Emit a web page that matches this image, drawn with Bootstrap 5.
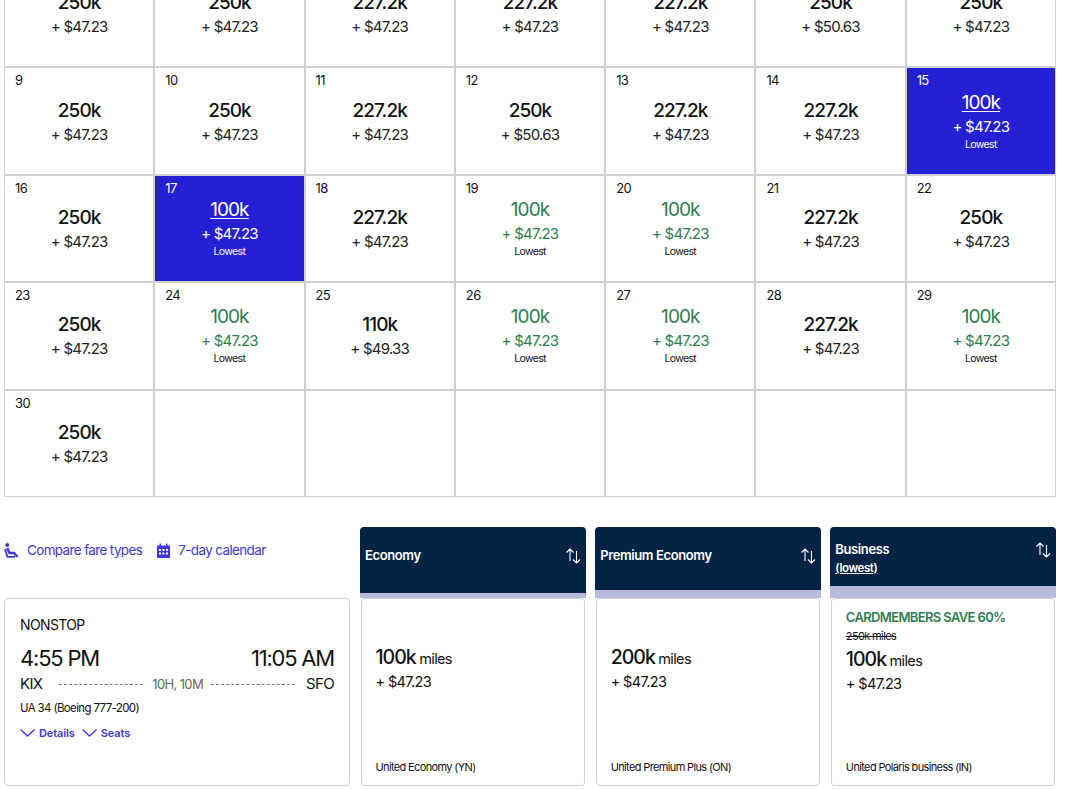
<!DOCTYPE html>
<html lang="en">
<head>
  <meta charset="UTF-8">
  <title>Award calendar</title>
  <link href="https://cdn.jsdelivr.net/npm/bootstrap@5.3.0/dist/css/bootstrap.min.css" rel="stylesheet">
  <style>
    html, body { height: 789px; overflow: hidden; }
    body { background: #fff; color: #111; font-family: Inter, "Liberation Sans", sans-serif; letter-spacing: -0.04em; }
    /* the shot is scrolled, first calendar row is cut at the top */
    .page-wrap { margin-top: -40px; padding: 0 24px 0 4px; }

    .cal-grid { display: grid; grid-template-columns: repeat(7, 1fr); grid-auto-rows: 1fr; gap: 2px; height: 537px; border: 1px solid #d0d0d0; background: #d0d0d0; }
    .day-cell { background: #fff; position: relative; display: flex; flex-direction: column; align-items: center; justify-content: center; padding-top: 1px; }
    .day-num { position: absolute; left: 10px; top: 4px; font-size: 13px; line-height: 16px; }
    .day-miles { font-size: 19px; font-weight: 500; line-height: 26px; letter-spacing: -0.05em; }
    .day-price { font-size: 15px; line-height: 22px; color: #222; letter-spacing: -0.05em; }
    .day-note { font-size: 10.500px; line-height: 16px; margin-top: -1px; }
    .day-low { padding-top: 0; }
    .day-low .day-miles, .day-low .day-price { color: #2e7d4f; font-weight: 400; }
    .day-sel { background: #2620d4; color: #fff; }
    .day-sel .day-miles, .day-sel .day-price { color: #fff; }
    .day-sel .day-miles { text-decoration: underline; text-underline-offset: 2px; text-decoration-thickness: 1px; }

    .fare-area { margin-top: 30px; gap: 10px; }
    .flight-side { width: 346px; flex: none; }
    .top-links { height: 47px; gap: 14px; padding-top: 12px; margin-bottom: 24px; }
    .top-links a { color: #3d38d6; font-size: 13.500px; line-height: 22px; text-decoration: none; gap: 7px; }
    .flight-box { height: 188px; border: 1px solid #d0d0d0; border-radius: 4px; padding: 16px 15px; }
    .stop-label { font-size: 14px; line-height: 20px; margin-bottom: 8px; }
    .time-line { font-size: 22px; line-height: 30px; letter-spacing: -0.055em; }
    .route-line { font-size: 15px; line-height: 20px; margin-top: 1px; }
    .route-dash { flex: 1; border-top: 1px dashed #777; }
    .dash-a { margin: 0 9px 0 17px; }
    .dash-b { margin: 0 11px 0 8px; }
    .route-time { color: #666; font-size: 13px; }
    .plane-line { font-size: 11.500px; line-height: 16px; margin-top: 6px; }
    .detail-links { gap: 7px; margin-top: 9px; }
    .detail-links a { color: #3d38d6; font-size: 11px; line-height: 16px; font-weight: 600; text-decoration: none; letter-spacing: -0.01em; gap: 4px; }

    .fare-list { flex: 1; gap: 9.500px; min-width: 0; }
    .fare-col { flex: 1 1 0; min-width: 0; }
    .fare-head { background: #052344; color: #fff; border-radius: 4px 4px 0 0; padding: 20px 5px 0 5px; font-size: 13px; font-weight: 600; line-height: 16px; letter-spacing: -0.03em; }
    .head-eco { height: 66px; }
    .head-prem { height: 62.500px; }
    .head-biz { height: 59px; padding-top: 14px; }
    .fare-head svg { margin-top: 1px; }
    .sub-low { font-size: 11.500px; line-height: 16px; text-decoration: underline; display: block; margin-top: 3px; }
    .fare-stripe { background: #b7b9dd; }
    .stripe-eco { height: 5px; }
    .stripe-prem { height: 8.500px; }
    .stripe-biz { height: 12px; }
    .fare-body { height: 188px; border: 1px solid #d0d0d0; border-radius: 4px; padding: 0 13.500px; margin: 0 1px; }
    .fare-gap { height: 45px; }
    .fare-save { color: #2e7d4f; font-size: 13px; font-weight: 600; line-height: 18px; margin-top: 9px; }
    .fare-old { font-size: 11px; line-height: 16px; text-decoration: line-through; margin-top: 2px; margin-bottom: 2px; }
    .fare-miles { font-size: 14.500px; line-height: 26px; }
    .fare-miles b { font-size: 19.500px; font-weight: 500; letter-spacing: -0.05em; }
    .fare-tax { font-size: 14.500px; line-height: 20px; }
    .fare-name { font-size: 11px; line-height: 16px; margin-top: auto; margin-bottom: 10px; }
  </style>
</head>
<body>
  <div class="page-wrap">
    <div class="cal-grid" id="cal"></div>

    <div class="fare-area d-flex">
      <div class="flight-side">
        <div class="top-links d-flex align-items-start">
          <a href="#" class="d-flex align-items-center">
            <svg width="16" height="15" viewBox="0 0 16 15" fill="none" stroke="#3d38d6" stroke-width="2.400"><circle cx="3.200" cy="2" r="2" fill="#3d38d6" stroke="none"/><path d="M3.200 5l2.300 5h4.500l3.500 4"/><path d="M1 6l2.500 7.800h7.500" stroke-width="1.800"/></svg>
            Compare fare types</a>
          <a href="#" class="d-flex align-items-center">
            <svg width="15" height="15" viewBox="0 0 15 15" fill="#3d38d6"><path d="M1 2.500h2.500V.5h1.500v2h5v-2h1.500v2H14V15H1z"/><g fill="#fff"><rect x="3" y="6" width="2" height="2"/><rect x="6.500" y="6" width="2" height="2"/><rect x="10" y="6" width="2" height="2"/><rect x="3" y="9.500" width="2" height="2"/><rect x="6.500" y="9.500" width="2" height="2"/><rect x="10" y="9.500" width="2" height="2"/></g></svg>
            7-day calendar</a>
        </div>
        <div class="flight-box">
          <div class="stop-label">NONSTOP</div>
          <div class="time-line d-flex justify-content-between"><span>4:55 PM</span><span>11:05 AM</span></div>
          <div class="route-line d-flex align-items-center"><span>KIX</span><span class="route-dash dash-a"></span><span class="route-time">10H, 10M</span><span class="route-dash dash-b"></span><span>SFO</span></div>
          <div class="plane-line">UA 34 (Boeing 777-200)</div>
          <div class="detail-links d-flex">
            <a href="#" class="d-flex align-items-center"><svg width="15" height="8" viewBox="0 0 15 8" fill="none" stroke="#3d38d6" stroke-width="1.300"><path d="M.5.500l7 6.500 7-6.500"/></svg>Details</a>
            <a href="#" class="d-flex align-items-center"><svg width="15" height="8" viewBox="0 0 15 8" fill="none" stroke="#3d38d6" stroke-width="1.300"><path d="M.5.500l7 6.500 7-6.500"/></svg>Seats</a>
          </div>
        </div>
      </div>

      <div class="fare-list d-flex">
        <div class="fare-col">
          <div class="fare-head head-eco d-flex justify-content-between align-items-start"><span>Economy</span><svg width="16" height="16" viewBox="0 0 16 16" fill="none" stroke="#fff" stroke-width="1.100"><path d="M1.500 4.500L5 1l3.500 3.500M5 1v12M8 11.500l3.500 3.500 3.500-3.500M11.500 15V3"/></svg></div>
          <div class="fare-stripe stripe-eco"></div>
          <div class="fare-body d-flex flex-column">
            <div class="fare-gap"></div>
            <div class="fare-miles"><b>100k</b> miles</div>
            <div class="fare-tax">+ $47.23</div>
            <div class="fare-name">United Economy (YN)</div>
          </div>
        </div>

        <div class="fare-col">
          <div class="fare-head head-prem d-flex justify-content-between align-items-start"><span>Premium Economy</span><svg width="16" height="16" viewBox="0 0 16 16" fill="none" stroke="#fff" stroke-width="1.100"><path d="M1.500 4.500L5 1l3.500 3.500M5 1v12M8 11.500l3.500 3.500 3.500-3.500M11.500 15V3"/></svg></div>
          <div class="fare-stripe stripe-prem"></div>
          <div class="fare-body d-flex flex-column">
            <div class="fare-gap"></div>
            <div class="fare-miles"><b>200k</b> miles</div>
            <div class="fare-tax">+ $47.23</div>
            <div class="fare-name">United Premium Plus (ON)</div>
          </div>
        </div>

        <div class="fare-col">
          <div class="fare-head head-biz d-flex justify-content-between align-items-start"><span>Business<span class="sub-low">(lowest)</span></span><svg width="16" height="16" viewBox="0 0 16 16" fill="none" stroke="#fff" stroke-width="1.100"><path d="M1.500 4.500L5 1l3.500 3.500M5 1v12M8 11.500l3.500 3.500 3.500-3.500M11.500 15V3"/></svg></div>
          <div class="fare-stripe stripe-biz"></div>
          <div class="fare-body d-flex flex-column">
            <div class="fare-save">CARDMEMBERS SAVE 60%</div>
            <div class="fare-old">250k miles</div>
            <div class="fare-miles"><b>100k</b> miles</div>
            <div class="fare-tax">+ $47.23</div>
            <div class="fare-name">United Polaris business (IN)</div>
          </div>
        </div>
      </div>
    </div>
  </div>

  <script src="https://cdn.jsdelivr.net/npm/bootstrap@5.3.0/dist/js/bootstrap.bundle.min.js"></script>
  <script>
    // day, miles, price, kind (l = lowest green, s = selected)
    var days = [
      [2,'250k','47.23'],[3,'250k','47.23'],[4,'227.2k','47.23'],[5,'227.2k','47.23'],[6,'227.2k','47.23'],[7,'250k','50.63'],[8,'250k','47.23'],
      [9,'250k','47.23'],[10,'250k','47.23'],[11,'227.2k','47.23'],[12,'250k','50.63'],[13,'227.2k','47.23'],[14,'227.2k','47.23'],[15,'100k','47.23','s'],
      [16,'250k','47.23'],[17,'100k','47.23','s'],[18,'227.2k','47.23'],[19,'100k','47.23','l'],[20,'100k','47.23','l'],[21,'227.2k','47.23'],[22,'250k','47.23'],
      [23,'250k','47.23'],[24,'100k','47.23','l'],[25,'110k','49.33'],[26,'100k','47.23','l'],[27,'100k','47.23','l'],[28,'227.2k','47.23'],[29,'100k','47.23','l'],
      [30,'250k','47.23']
    ];
    var html = '';
    days.forEach(function (d) {
      var cls = d[3] === 's' ? ' day-low day-sel' : d[3] === 'l' ? ' day-low' : '';
      html += '<div class="day-cell' + cls + '"><span class="day-num">' + d[0] + '</span>' +
        '<div class="day-miles">' + d[1] + '</div><div class="day-price">+ $' + d[2] + '</div>' +
        (d[3] ? '<div class="day-note">Lowest</div>' : '') + '</div>';
    });
    for (var i = 0; i < 6; i++) html += '<div class="day-cell"></div>';
    document.getElementById('cal').innerHTML = html;
  </script>
</body>
</html>
